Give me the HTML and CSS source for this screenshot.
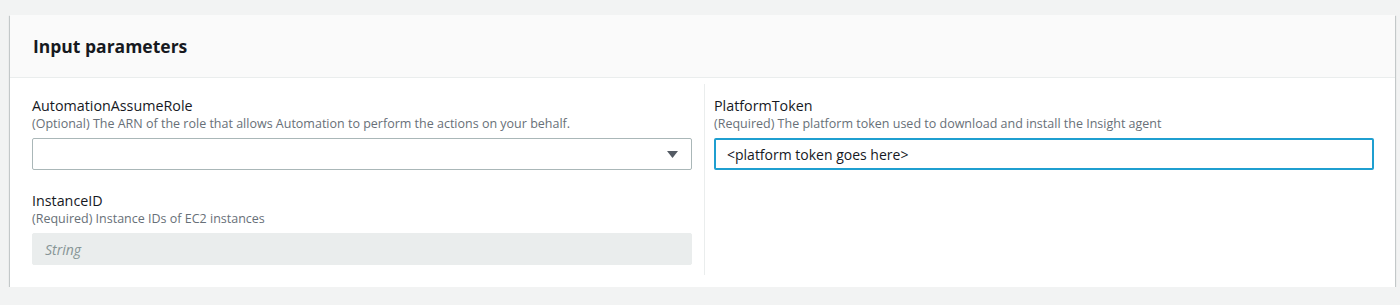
FILE: index.html
```html
<!doctype html>
<html lang="en">

<head>
    <meta charset="UTF-8">
    <title>Input parameters</title>
    <link rel="stylesheet" href="styles.css">
</head>

<body>
    <div class="panel">
        <div class="panel-header">
            <h2>Input parameters</h2>
        </div>
        <div class="panel-body">
            <div class="column">
                <div class="field">
                    <label class="field-label">AutomationAssumeRole</label>
                    <div class="field-desc">(Optional) The ARN of the role that allows Automation to perform the actions on your behalf.</div>
                    <div class="select">
                        <span class="select-value"></span>
                        <svg class="caret" width="11" height="7" viewBox="0 0 11 7"><path d="M0 0 H11 L5.5 7 Z" fill="#545b64"/></svg>
                    </div>
                </div>
                <div class="field">
                    <label class="field-label">InstanceID</label>
                    <div class="field-desc">(Required) Instance IDs of EC2 instances</div>
                    <div class="input disabled">String</div>
                </div>
            </div>
            <div class="column">
                <div class="field">
                    <label class="field-label">PlatformToken</label>
                    <div class="field-desc">(Required) The platform token used to download and install the Insight agent</div>
                    <div class="input focused">&lt;platform token goes here&gt;</div>
                </div>
            </div>
        </div>
    </div>
</body>

</html>
```

FILE: styles.css
```css
body {
    background-color: #f2f3f3;
    font-family: 'Open Sans', 'Liberation Sans', sans-serif;
    color: #16191f;
    margin: 0;
    padding: 15px 5px 0 10px;
}

.panel {
    background-color: #fff;
    box-shadow: 0 1px 1px 0 rgba(0, 28, 36, 0.3), 1px 1px 1px 0 rgba(0, 28, 36, 0.15), -1px 1px 1px 0 rgba(0, 28, 36, 0.15);
}

.panel-header {
    background-color: #fafafa;
    border-bottom: 1px solid #eaeded;
    height: 62px;
    padding: 0 23px;
    display: flex;
    align-items: center;
}

.panel-header h2 {
    margin: 0;
    font-size: 17.5px;
    font-weight: 700;
}

.panel-body {
    display: flex;
    padding: 6px 0 12px 0;
}

.column {
    flex: 1;
    padding: 12px 12px 10px 22px;
}

.column + .column {
    border-left: 1px solid #eaeded;
    padding: 12px 21px 10px 9px;
}

.field + .field {
    margin-top: 21px;
}

.field-label {
    display: block;
    font-size: 14.3px;
    line-height: 19px;
}

.field-desc {
    font-size: 12.5px;
    line-height: 18px;
    color: #687078;
    margin-bottom: 5px;
}

.select,
.input {
    height: 32px;
    box-sizing: border-box;
    border: 1px solid #aab7b8;
    border-radius: 2px;
    display: flex;
    align-items: center;
    padding: 0 12px;
    font-size: 14px;
}

.select {
    justify-content: space-between;
    padding-right: 13px;
}

.input.disabled {
    background-color: #eaeded;
    border-color: #eaeded;
    color: #879596;
    font-style: italic;
}

.input.focused {
    border: 2px solid #1f9fd0;
    padding-left: 11px;
}
```
